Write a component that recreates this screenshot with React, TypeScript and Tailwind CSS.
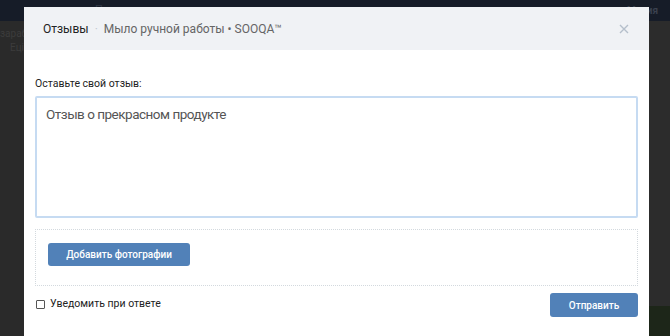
import { useEffect, useRef, useState } from 'react';

export default function App() {
    const [text, setText] = useState('Отзыв о прекрасном продукте');
    const [notify, setNotify] = useState(false);
    const areaRef = useRef<HTMLTextAreaElement>(null);

    useEffect(() => {
        const el = areaRef.current;
        if (el) {
            el.focus();
            el.setSelectionRange(el.value.length, el.value.length);
        }
    }, []);

    return (
        <div className="relative w-[670px] h-[336px] overflow-hidden bg-[#2a2a2a] font-['Roboto',sans-serif]">
            {/* dimmed page behind */}
            <div className="h-[21px] bg-[#161c28] flex items-center justify-between pl-[95px] pr-[12px]">
                <span className="text-[11px] text-[#2f3644]">Поиск</span>
                <span className="text-[10px] font-bold text-[#3a414e]">Мария</span>
            </div>
            <div className="flex justify-between">
                <div className="pt-[6px] text-[10px] leading-[14px] text-[#3c3c3c]">
                    <div>зараб</div>
                    <div className="pl-[10px]">Еці</div>
                </div>
                <div className="w-[22px] h-[315px] bg-[#2c2c2c] flex flex-col justify-end">
                    <div className="h-[30px] bg-[#1d2619]" />
                </div>
            </div>

            {/* modal */}
            <div className="absolute left-[24px] top-[7px] w-[625px] h-[340px] bg-white flex flex-col">
                <div className="h-[43px] bg-[#f0f2f5] flex items-center pl-[19px] pr-[20px] text-[12px] shrink-0">
                    <span className="text-[#222222]">Отзывы</span>
                    <span className="text-[#c3cad3] mx-[6px]">·</span>
                    <span className="text-[#656565]">Мыло ручной работы • SOOQA™</span>
                    <button className="ml-auto text-[#b5bfcb]">
                        <svg width="10" height="10" viewBox="0 0 10 10">
                            <path d="M1 1 L9 9 M9 1 L1 9" stroke="currentColor" strokeWidth="1.4" />
                        </svg>
                    </button>
                </div>

                <div className="px-[11px] pt-[27px] flex flex-col">
                    <label className="text-[10.5px] leading-[14px] text-[#222222] mb-[5px]">Оставьте свой отзыв:</label>
                    <textarea
                        ref={areaRef}
                        value={text}
                        onChange={(e) => setText(e.target.value)}
                        className="h-[122px] w-full resize-none border-2 border-[#c6dbf2] rounded-[2px] px-[9px] py-[6px] text-[13.5px] tracking-[-0.5px] leading-[20px] text-[#555555] caret-[#333333] outline-none"
                    />

                    <div className="mt-[11px] h-[57px] border border-dotted border-[#d3d9de] px-[12px] pt-[11px]">
                        <button className="h-[23px] w-[142px] rounded-[3px] bg-[#5181b8] text-white text-[10px] font-medium">
                            Добавить фотографии
                        </button>
                    </div>

                    <div className="mt-[7px] flex items-start justify-between">
                        <label className="flex items-center mt-[4px] text-[10.5px] leading-[14px] text-[#222222] cursor-pointer">
                            <input
                                type="checkbox"
                                checked={notify}
                                onChange={(e) => setNotify(e.target.checked)}
                                className="appearance-none w-[9px] h-[9px] ml-[1px] mr-[5px] border border-[#555555] rounded-[1px] bg-white checked:bg-[#5181b8]"
                            />
                            Уведомить при ответе
                        </label>
                        <button className="h-[24px] w-[88px] rounded-[3px] bg-[#5181b8] text-white text-[10px] font-medium">
                            Отправить
                        </button>
                    </div>
                </div>
            </div>
        </div>
    );
}
